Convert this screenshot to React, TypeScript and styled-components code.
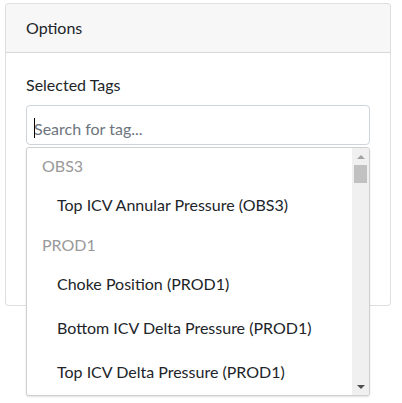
import React from 'react'
import styled, { createGlobalStyle } from 'styled-components'

const GlobalStyle = createGlobalStyle`
  * {
    box-sizing: border-box;
  }
  html,
  body {
    margin: 0;
    background: #fff;
  }
  body {
    color: #212529;
    font-family: Lato, 'Liberation Sans', sans-serif;
    font-size: 16px;
    line-height: 24px;
  }
`

const Page = styled('div')`
  min-height: 403px;
  padding: 3px 11px 0 5px;
`

const Card = styled('div')`
  width: 386px;
  border: 1px solid rgba(0, 0, 0, 0.125);
  border-radius: 4px;
  background: #fff;
`

const CardHeader = styled('div')`
  padding: 12px 20px;
  background: rgba(0, 0, 0, 0.03);
  border-bottom: 1px solid rgba(0, 0, 0, 0.125);
  border-radius: 3px 3px 0 0;
`

const CardBody = styled('div')`
  height: 252px;
  padding: 20px;
`

const FormGroup = styled('div')`
  position: relative;
`

const Label = styled('label')`
  display: block;
  margin-bottom: 8px;
`

const SearchWrap = styled('div')`
  position: relative;
`

const SearchInput = styled('input')`
  display: block;
  width: 100%;
  height: 40px;
  padding: 6px 7px 0;
  border: 1px solid #ced4da;
  border-radius: 4px;
  font: inherit;
  color: #495057;
  outline: none;
  &::placeholder {
    color: #6c757d;
  }
`

const Caret = styled('span')`
  position: absolute;
  left: 8px;
  top: 13px;
  width: 1px;
  height: 20px;
  background: #000;
`

const Dropdown = styled('div')`
  position: absolute;
  top: calc(100% + 2px);
  left: 0;
  right: 0;
  height: 249px;
  display: flex;
  background: #fff;
  border: 1px solid #cfcfcf;
  border-radius: 3px;
  box-shadow: 0 1px 2px rgba(0, 0, 0, 0.12);
  overflow: hidden;
  z-index: 10;
`

const List = styled('div')`
  flex: 1;
  overflow: hidden;
`

const GroupHeader = styled('div')`
  padding: 6px 15px 5px;
  color: #999;
`

const Option = styled('div')`
  padding: 10px 30px;
  white-space: nowrap;
`

const Scrollbar = styled('div')`
  width: 17px;
  display: flex;
  flex-direction: column;
  background: #f0f0f0;
`

const ArrowButton = styled('div')<{ $dir: 'up' | 'down' }>`
  height: 17px;
  display: flex;
  align-items: center;
  justify-content: center;
  &::after {
    content: '';
    width: 0;
    height: 0;
    border-left: 4px solid transparent;
    border-right: 4px solid transparent;
    ${props =>
      props.$dir === 'up'
        ? 'border-bottom: 4px solid #a3a3a3;'
        : 'border-top: 4px solid #505050;'}
  }
`

const Thumb = styled('div')`
  height: 18px;
  margin: 0 2px;
  background: #c1c1c1;
`

const Track = styled('div')`
  flex: 1;
`

const groups = [
  { name: 'OBS3', tags: ['Top ICV Annular Pressure (OBS3)'] },
  {
    name: 'PROD1',
    tags: [
      'Choke Position (PROD1)',
      'Bottom ICV Delta Pressure (PROD1)',
      'Top ICV Delta Pressure (PROD1)',
    ],
  },
]

const App = () => {
  return (
    <Page>
      <GlobalStyle />
      <Card>
        <CardHeader>Options</CardHeader>
        <CardBody>
          <FormGroup>
            <Label>Selected Tags</Label>
            <SearchWrap>
              <SearchInput placeholder="Search for tag..." />
              <Caret />
              <Dropdown>
                <List>
                  {groups.map(group => (
                    <React.Fragment key={group.name}>
                      <GroupHeader>{group.name}</GroupHeader>
                      {group.tags.map(tag => (
                        <Option key={tag}>{tag}</Option>
                      ))}
                    </React.Fragment>
                  ))}
                </List>
                <Scrollbar>
                  <ArrowButton $dir="up" />
                  <Thumb />
                  <Track />
                  <ArrowButton $dir="down" />
                </Scrollbar>
              </Dropdown>
            </SearchWrap>
          </FormGroup>
        </CardBody>
      </Card>
    </Page>
  )
}

export default App
